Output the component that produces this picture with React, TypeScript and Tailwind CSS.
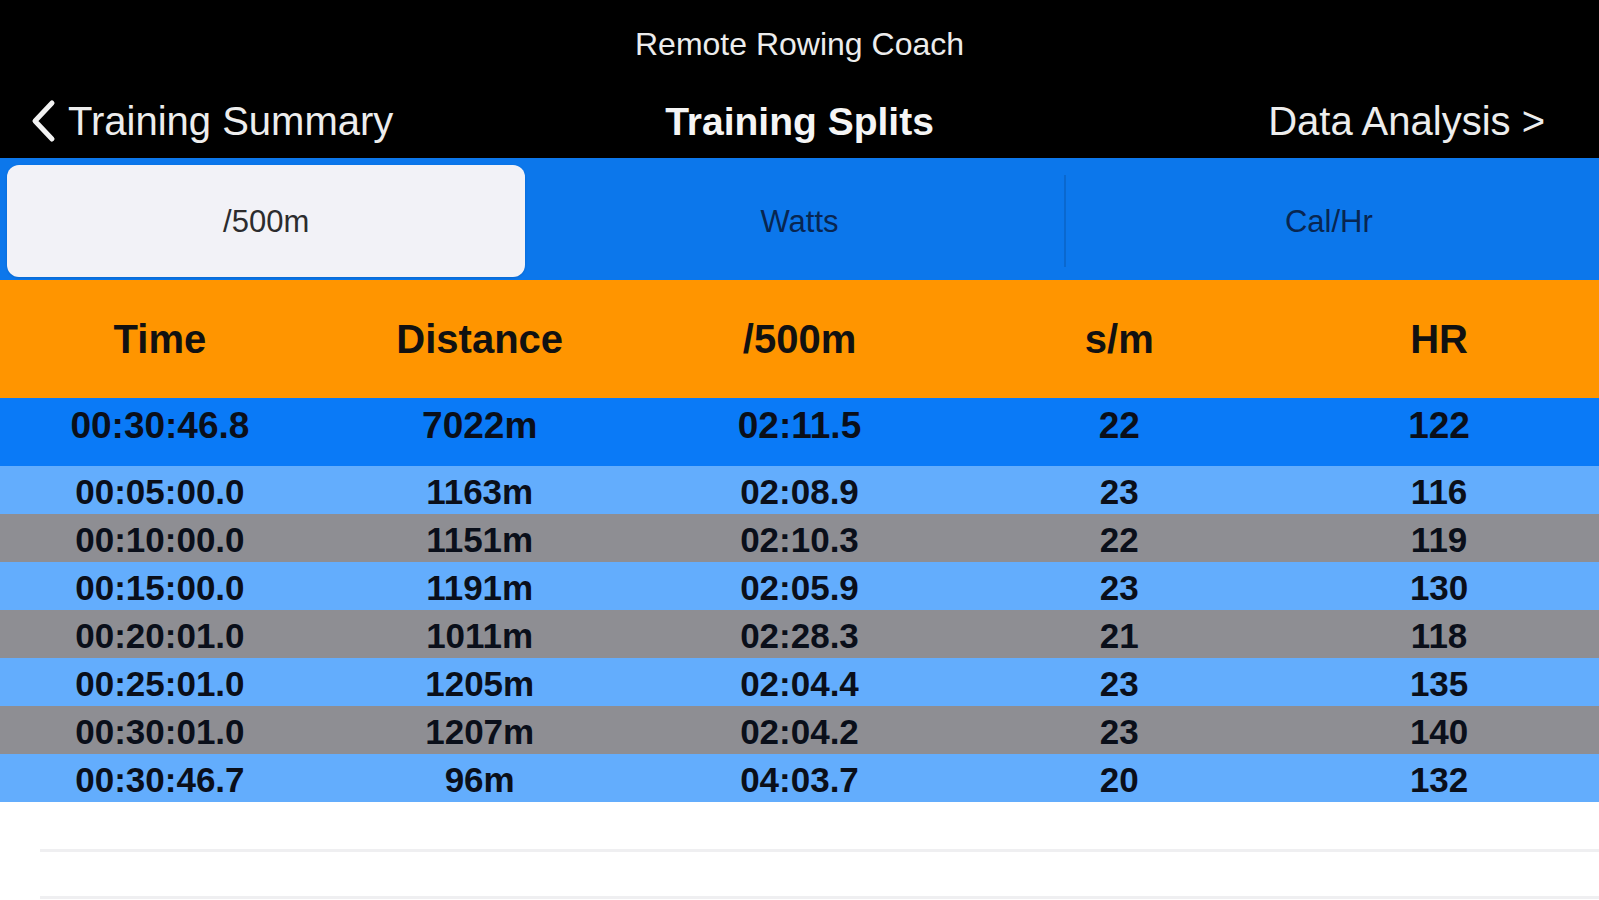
const splits = [
  ["00:05:00.0", "1163m", "02:08.9", "23", "116"],
  ["00:10:00.0", "1151m", "02:10.3", "22", "119"],
  ["00:15:00.0", "1191m", "02:05.9", "23", "130"],
  ["00:20:01.0", "1011m", "02:28.3", "21", "118"],
  ["00:25:01.0", "1205m", "02:04.4", "23", "135"],
  ["00:30:01.0", "1207m", "02:04.2", "23", "140"],
  ["00:30:46.7", "96m", "04:03.7", "20", "132"],
];

const headers = ["Time", "Distance", "/500m", "s/m", "HR"];
const summary = ["00:30:46.8", "7022m", "02:11.5", "22", "122"];

const NavBar = () => (
  <div className="h-[158px] bg-black text-white flex flex-col">
    <div className="mt-[28px] h-[32px] text-[32px] leading-none text-center text-[#ececec]">
      Remote Rowing Coach
    </div>
    <div className="mt-[39px] h-[40px] grid grid-cols-[1fr_auto_1fr] items-center">
      <div className="flex items-center pl-[30px] text-[#ededed]">
        <svg width="26" height="44" viewBox="0 0 26 44" fill="none">
          <polyline
            points="22,4 5,22 22,40"
            stroke="#f2f2f2"
            strokeWidth="5"
            strokeLinecap="round"
            strokeLinejoin="round"
          />
        </svg>
        <span className="ml-[12px] text-[40px] leading-none">Training Summary</span>
      </div>
      <div className="text-[39px] font-bold leading-none text-[#f5f5f5]">Training Splits</div>
      <div className="text-right pr-[54px] text-[40px] leading-none text-[#ededed]">
        Data Analysis &gt;
      </div>
    </div>
  </div>
);

const Segments = () => (
  <div className="h-[122px] bg-[#0c77eb] grid grid-cols-3 pt-[7px] pb-[3px] px-[7px]">
    <div className="flex pr-[10px]">
      <div className="flex-1 rounded-[12px] bg-[#f2f2f7] shadow-sm flex items-center justify-center text-[31px] leading-none text-[#2c2c2e]">
        /500m
      </div>
    </div>
    <div className="flex items-center justify-center text-[31px] leading-none text-[#082651]">
      Watts
    </div>
    <div className="flex items-center">
      <div className="w-[2px] h-[92px] bg-[#0a68cf]"></div>
      <div className="flex-1 text-center text-[31px] leading-none text-[#082651]">Cal/Hr</div>
    </div>
  </div>
);

export default function App() {
  return (
    <div className="w-full h-[900px] bg-white overflow-hidden flex flex-col font-['Liberation_Sans',Arial,sans-serif]">
      <NavBar />
      <Segments />

      <div className="h-[118px] bg-[#ff9500] grid grid-cols-5 items-center text-[40px] font-bold leading-none text-[#111111]">
        {headers.map((h) => (
          <div key={h} className="text-center">
            {h}
          </div>
        ))}
      </div>

      <div className="h-[68px] bg-[#0a7af7] grid grid-cols-5 items-start pt-[9px] text-[37px] font-bold leading-none text-[#0a0f1a]">
        {summary.map((v, i) => (
          <div key={i} className="text-center">
            {v}
          </div>
        ))}
      </div>

      {splits.map((row, r) => (
        <div
          key={r}
          className={
            r % 2 === 0
              ? "h-[48px] bg-[#63adfd] grid grid-cols-5 items-center pt-[3px] text-[35px] font-bold leading-none text-[#0a0f1a]"
              : "h-[48px] bg-[#8e8e93] grid grid-cols-5 items-center pt-[3px] text-[35px] font-bold leading-none text-[#0a0f1a]"
          }
        >
          {row.map((v, i) => (
            <div key={i} className="text-center">
              {v}
            </div>
          ))}
        </div>
      ))}

      <div className="pt-[47px] pl-[40px]">
        <div className="h-[3px] bg-[#efeff1]"></div>
        <div className="mt-[44px] h-[3px] bg-[#efeff1]"></div>
      </div>
    </div>
  );
}
